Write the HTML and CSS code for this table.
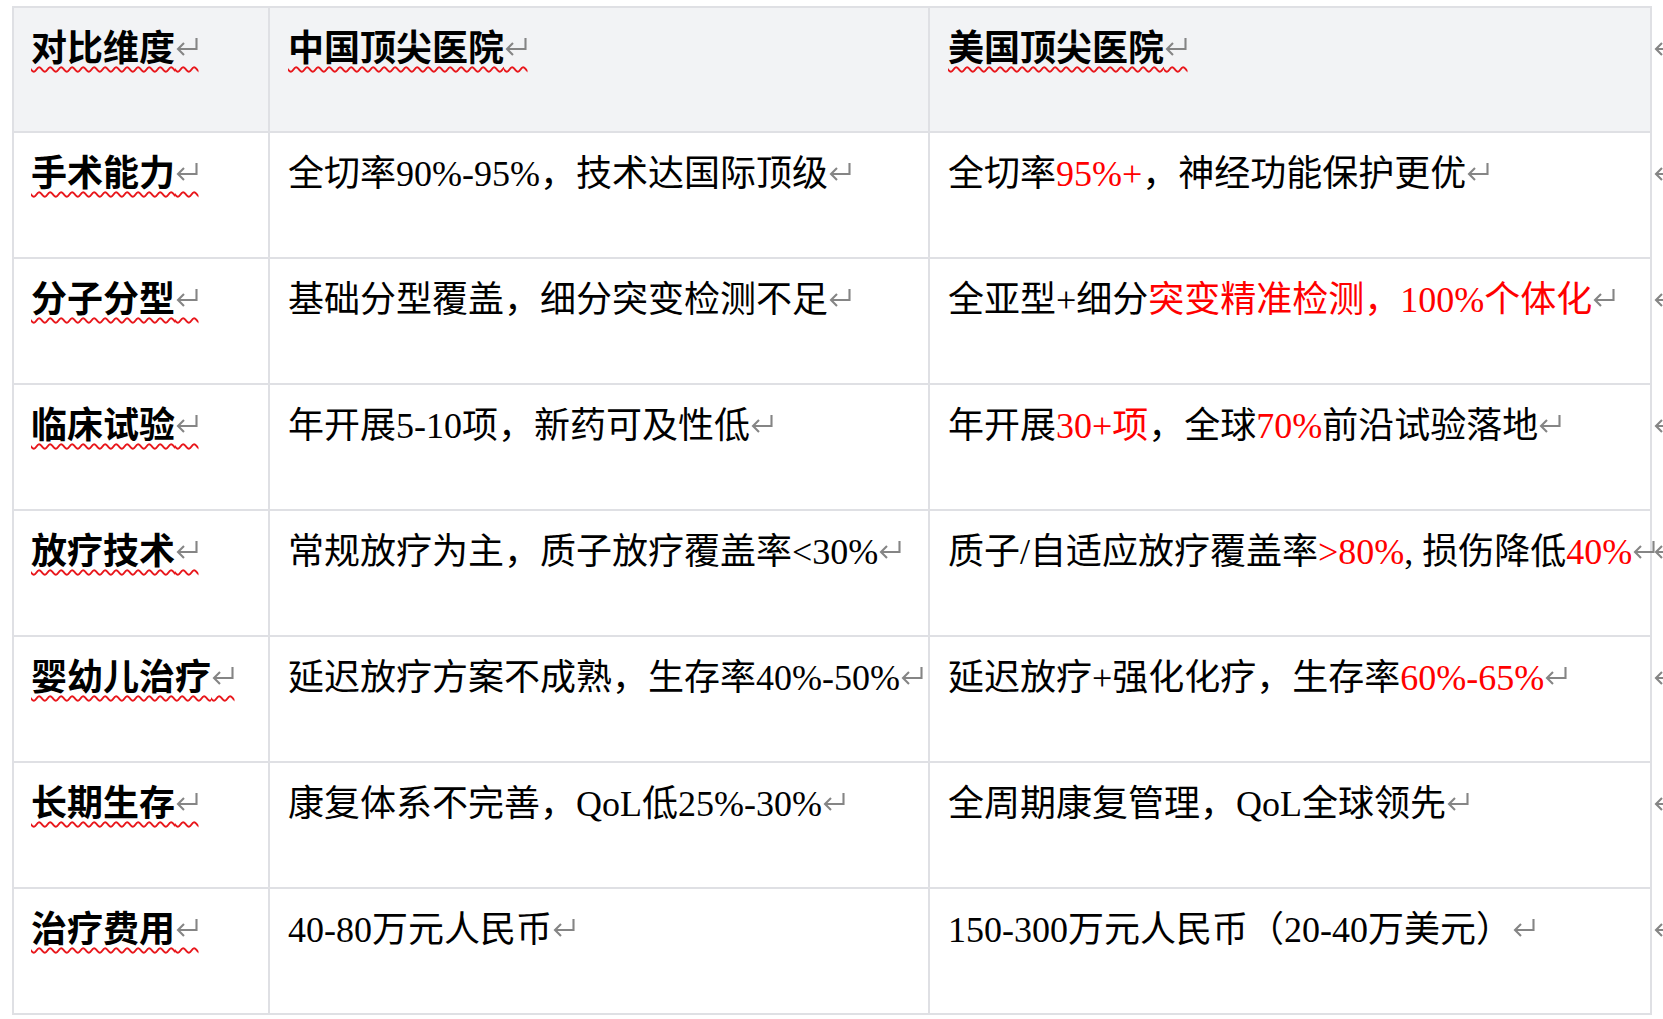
FILE: index.html
```html
<!DOCTYPE html>
<html lang="zh-CN">
<head>
<meta charset="utf-8">
<title>对比</title>
<link rel="stylesheet" href="styles.css">
</head>
<body>
<div class="table">
  <div class="row head">
    <div class="cell"><span class="wave">对比维度<span class="ret">↵<svg class="arr" viewBox="0 0 24 20"><path d="M21.5 1V12H3M9 6L3 12L9 18"/></svg></span></span></div>
    <div class="cell"><span class="wave">中国顶尖医院<span class="ret">↵<svg class="arr" viewBox="0 0 24 20"><path d="M21.5 1V12H3M9 6L3 12L9 18"/></svg></span></span></div>
    <div class="cell"><span class="wave">美国顶尖医院<span class="ret">↵<svg class="arr" viewBox="0 0 24 20"><path d="M21.5 1V12H3M9 6L3 12L9 18"/></svg></span></span></div>
    <div class="end"><span class="ret">↵<svg class="arr" viewBox="0 0 24 20"><path d="M21.5 1V12H3M9 6L3 12L9 18"/></svg></span></div>
  </div>
  <div class="row">
    <div class="cell key"><span class="wave">手术能力<span class="ret">↵<svg class="arr" viewBox="0 0 24 20"><path d="M21.5 1V12H3M9 6L3 12L9 18"/></svg></span></span></div>
    <div class="cell">全切率90%-95%，技术达国际顶级<span class="ret">↵<svg class="arr" viewBox="0 0 24 20"><path d="M21.5 1V12H3M9 6L3 12L9 18"/></svg></span></div>
    <div class="cell">全切率<span class="red">95%+</span>，神经功能保护更优<span class="ret">↵<svg class="arr" viewBox="0 0 24 20"><path d="M21.5 1V12H3M9 6L3 12L9 18"/></svg></span></div>
    <div class="end"><span class="ret">↵<svg class="arr" viewBox="0 0 24 20"><path d="M21.5 1V12H3M9 6L3 12L9 18"/></svg></span></div>
  </div>
  <div class="row">
    <div class="cell key"><span class="wave">分子分型<span class="ret">↵<svg class="arr" viewBox="0 0 24 20"><path d="M21.5 1V12H3M9 6L3 12L9 18"/></svg></span></span></div>
    <div class="cell">基础分型覆盖，细分突变检测不足<span class="ret">↵<svg class="arr" viewBox="0 0 24 20"><path d="M21.5 1V12H3M9 6L3 12L9 18"/></svg></span></div>
    <div class="cell">全亚型+细分<span class="red">突变精准检测，100%个体化</span><span class="ret">↵<svg class="arr" viewBox="0 0 24 20"><path d="M21.5 1V12H3M9 6L3 12L9 18"/></svg></span></div>
    <div class="end"><span class="ret">↵<svg class="arr" viewBox="0 0 24 20"><path d="M21.5 1V12H3M9 6L3 12L9 18"/></svg></span></div>
  </div>
  <div class="row">
    <div class="cell key"><span class="wave">临床试验<span class="ret">↵<svg class="arr" viewBox="0 0 24 20"><path d="M21.5 1V12H3M9 6L3 12L9 18"/></svg></span></span></div>
    <div class="cell">年开展5-10项，新药可及性低<span class="ret">↵<svg class="arr" viewBox="0 0 24 20"><path d="M21.5 1V12H3M9 6L3 12L9 18"/></svg></span></div>
    <div class="cell">年开展<span class="red">30+项</span>，全球<span class="red">70%</span>前沿试验落地<span class="ret">↵<svg class="arr" viewBox="0 0 24 20"><path d="M21.5 1V12H3M9 6L3 12L9 18"/></svg></span></div>
    <div class="end"><span class="ret">↵<svg class="arr" viewBox="0 0 24 20"><path d="M21.5 1V12H3M9 6L3 12L9 18"/></svg></span></div>
  </div>
  <div class="row">
    <div class="cell key"><span class="wave">放疗技术<span class="ret">↵<svg class="arr" viewBox="0 0 24 20"><path d="M21.5 1V12H3M9 6L3 12L9 18"/></svg></span></span></div>
    <div class="cell">常规放疗为主，质子放疗覆盖率&lt;30%<span class="ret">↵<svg class="arr" viewBox="0 0 24 20"><path d="M21.5 1V12H3M9 6L3 12L9 18"/></svg></span></div>
    <div class="cell">质子/自适应放疗覆盖率<span class="red">&gt;80%</span>, 损伤降低<span class="red">40%</span><span class="ret">↵<svg class="arr" viewBox="0 0 24 20"><path d="M21.5 1V12H3M9 6L3 12L9 18"/></svg></span></div>
    <div class="end"><span class="ret">↵<svg class="arr" viewBox="0 0 24 20"><path d="M21.5 1V12H3M9 6L3 12L9 18"/></svg></span></div>
  </div>
  <div class="row">
    <div class="cell key"><span class="wave">婴幼儿治疗<span class="ret">↵<svg class="arr" viewBox="0 0 24 20"><path d="M21.5 1V12H3M9 6L3 12L9 18"/></svg></span></span></div>
    <div class="cell">延迟放疗方案不成熟，生存率40%-50%<span class="ret">↵<svg class="arr" viewBox="0 0 24 20"><path d="M21.5 1V12H3M9 6L3 12L9 18"/></svg></span></div>
    <div class="cell">延迟放疗+强化化疗，生存率<span class="red">60%-65%</span><span class="ret">↵<svg class="arr" viewBox="0 0 24 20"><path d="M21.5 1V12H3M9 6L3 12L9 18"/></svg></span></div>
    <div class="end"><span class="ret">↵<svg class="arr" viewBox="0 0 24 20"><path d="M21.5 1V12H3M9 6L3 12L9 18"/></svg></span></div>
  </div>
  <div class="row">
    <div class="cell key"><span class="wave">长期生存<span class="ret">↵<svg class="arr" viewBox="0 0 24 20"><path d="M21.5 1V12H3M9 6L3 12L9 18"/></svg></span></span></div>
    <div class="cell">康复体系不完善，QoL低25%-30%<span class="ret">↵<svg class="arr" viewBox="0 0 24 20"><path d="M21.5 1V12H3M9 6L3 12L9 18"/></svg></span></div>
    <div class="cell">全周期康复管理，QoL全球领先<span class="ret">↵<svg class="arr" viewBox="0 0 24 20"><path d="M21.5 1V12H3M9 6L3 12L9 18"/></svg></span></div>
    <div class="end"><span class="ret">↵<svg class="arr" viewBox="0 0 24 20"><path d="M21.5 1V12H3M9 6L3 12L9 18"/></svg></span></div>
  </div>
  <div class="row">
    <div class="cell key"><span class="wave">治疗费用<span class="ret">↵<svg class="arr" viewBox="0 0 24 20"><path d="M21.5 1V12H3M9 6L3 12L9 18"/></svg></span></span></div>
    <div class="cell">40-80万元人民币<span class="ret">↵<svg class="arr" viewBox="0 0 24 20"><path d="M21.5 1V12H3M9 6L3 12L9 18"/></svg></span></div>
    <div class="cell">150-300万元人民币（20-40万美元）<span class="ret">↵<svg class="arr" viewBox="0 0 24 20"><path d="M21.5 1V12H3M9 6L3 12L9 18"/></svg></span></div>
    <div class="end"><span class="ret">↵<svg class="arr" viewBox="0 0 24 20"><path d="M21.5 1V12H3M9 6L3 12L9 18"/></svg></span></div>
  </div>
</div>
</body>
</html>
```
FILE: styles.css
```css
* { box-sizing: border-box; }
html, body { margin: 0; padding: 0; background: #fff; }
body {
  overflow: hidden;
  font-family: "Liberation Serif", "Noto Sans CJK SC", serif;
  font-size: 36px;
  color: #000;
}
.table { margin: 6px 0 0 12px; }
.row {
  display: grid;
  grid-template-columns: 258px 660px 722px 11px;
  height: 126px;
}
.row.head { height: 127px; }
.cell {
  border-right: 2px solid #dfe0e4;
  border-bottom: 2px solid #dfe0e4;
  padding: 20px 0 0 18px;
  line-height: 1.2;
  white-space: nowrap;
}
.row .cell:first-child { border-left: 2px solid #dfe0e4; padding-left: 17px; }
.head .cell {
  border-top: 2px solid #dfe0e4;
  background: #f2f3f5;
  font-weight: 700;
}
.key { font-weight: 700; }
.end {
  padding: 20px 0 0 1px;
  line-height: 1.2;
  overflow: hidden;
  white-space: nowrap;
}
.head .end { padding-top: 22px; }
.wave {
  text-decoration: underline wavy #e8161b;
  text-decoration-thickness: 1.5px;
  text-underline-offset: 5px;
}
.red { color: #f00; }
.ret {
  position: relative;
  font-family: "DejaVu Sans", sans-serif;
  font-weight: 400;
  font-size: 28px;
  color: transparent;
}
.arr {
  position: absolute;
  left: 0;
  top: 2px;
  width: 24px;
  height: 20px;
  fill: none;
  stroke: #858585;
  stroke-width: 2.1;
}
```
